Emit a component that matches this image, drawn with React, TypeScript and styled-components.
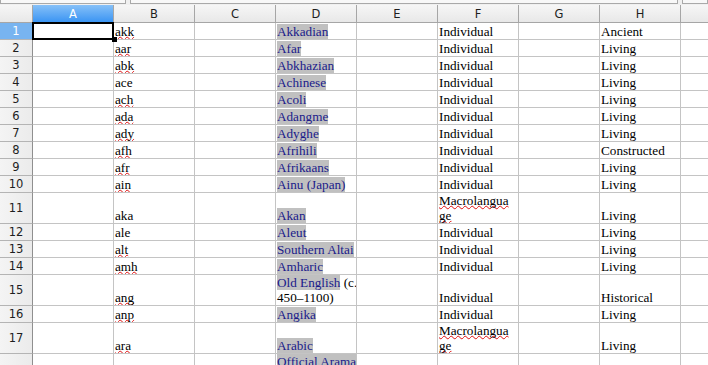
import { FC, ReactNode } from "react";
import styled, { createGlobalStyle } from "styled-components";

interface SheetRow {
  code: string;
  codeOk?: boolean;
  name: string[];
  note?: string[];
  scope: string[];
  type: string;
  lines?: number;
}

const rows: SheetRow[] = [
  { code: "akk", name: ["Akkadian"], scope: ["Individual"], type: "Ancient" },
  { code: "aar", name: ["Afar"], scope: ["Individual"], type: "Living" },
  { code: "abk", name: ["Abkhazian"], scope: ["Individual"], type: "Living" },
  { code: "ace", codeOk: true, name: ["Achinese"], scope: ["Individual"], type: "Living" },
  { code: "ach", name: ["Acoli"], scope: ["Individual"], type: "Living" },
  { code: "ada", name: ["Adangme"], scope: ["Individual"], type: "Living" },
  { code: "ady", name: ["Adyghe"], scope: ["Individual"], type: "Living" },
  { code: "afh", name: ["Afrihili"], scope: ["Individual"], type: "Constructed" },
  { code: "afr", name: ["Afrikaans"], scope: ["Individual"], type: "Living" },
  { code: "ain", name: ["Ainu (Japan)"], scope: ["Individual"], type: "Living" },
  { code: "aka", codeOk: true, name: ["Akan"], scope: ["Macrolangua", "ge"], type: "Living", lines: 2 },
  { code: "ale", codeOk: true, name: ["Aleut"], scope: ["Individual"], type: "Living" },
  { code: "alt", name: ["Southern Altai"], scope: ["Individual"], type: "Living" },
  { code: "amh", name: ["Amharic"], scope: ["Individual"], type: "Living" },
  {
    code: "ang",
    name: ["Old English"],
    note: [" (c.", "450–1100)"],
    scope: ["Individual"],
    type: "Historical",
    lines: 2,
  },
  { code: "anp", name: ["Angika"], scope: ["Individual"], type: "Living" },
  { code: "ara", name: ["Arabic"], scope: ["Macrolangua", "ge"], type: "Living", lines: 2 },
  {
    code: "arc",
    name: ["Official Aramai", "c (700–300", "BCE); Imperial", "Aramaic (700–", "300 BCE)"],
    scope: ["Individual"],
    type: "Ancient",
    lines: 5,
  },
];

const columns = ["A", "B", "C", "D", "E", "F", "G", "H", "I"];

const GlobalStyle = createGlobalStyle`
  html, body {
    margin: 0;
    padding: 0;
    background: #ffffff;
    overflow: hidden;
  }
`;

// Styled Components
const Sheet = styled.div`
  width: 708px;
  height: 365px;
  overflow: hidden;
  display: flex;
  flex-direction: column;
  background: #ffffff;
`;

const TopStrip = styled.div`
  height: 5px;
  flex: none;
  display: flex;
  gap: 4px;
  background: #f0f0f0;
`;

const FieldBox = styled.div<{ $w: number }>`
  width: ${(p) => p.$w}px;
  height: 4px;
  flex: none;
  box-sizing: border-box;
  background: #f8f8f8;
  border: 1px solid #a9a9a9;
  border-top: none;
`;

const HeaderRow = styled.div`
  height: 18px;
  flex: none;
  display: flex;
  box-sizing: border-box;
  border-bottom: 1px solid #a6a6a6;
  background: linear-gradient(#f6f6f6, #e8e8e8);
`;

const Corner = styled.div`
  width: 33px;
  flex: none;
  box-sizing: border-box;
  border-right: 1px solid #a6a6a6;
`;

const ColHeader = styled.div<{ $active?: boolean }>`
  width: 81px;
  flex: none;
  box-sizing: border-box;
  border-right: 1px solid #a6a6a6;
  display: flex;
  align-items: center;
  justify-content: center;
  font-family: "DejaVu Sans", "Liberation Sans", sans-serif;
  font-size: 11.5px;
  color: ${(p) => (p.$active ? "#ffffff" : "#1e1e1e")};
  background: ${(p) => (p.$active ? "linear-gradient(#86c0f8, #3b95f3)" : "transparent")};
`;

const Row = styled.div<{ $h: number }>`
  position: relative;
  height: ${(p) => p.$h}px;
  flex: none;
  display: flex;
`;

const RowHeader = styled.div<{ $active?: boolean }>`
  width: 33px;
  flex: none;
  box-sizing: border-box;
  border-right: 1px solid #8f8f8f;
  border-bottom: 1px solid #b4b4b4;
  display: flex;
  align-items: center;
  justify-content: center;
  font-family: "DejaVu Sans", "Liberation Sans", sans-serif;
  font-size: 11.5px;
  color: ${(p) => (p.$active ? "#ffffff" : "#1e1e1e")};
  background: ${(p) => (p.$active ? "#78b4f0" : "linear-gradient(90deg, #f4f4f4, #ebebeb)")};
`;

const Cell = styled.div`
  width: 81px;
  flex: none;
  box-sizing: border-box;
  border-right: 1px solid #c4c4c4;
  border-bottom: 1px solid #c4c4c4;
  padding: 0 0 0 1px;
  overflow: hidden;
  display: flex;
  flex-direction: column;
  justify-content: flex-end;
  font-family: "Liberation Serif", "Times New Roman", serif;
  font-size: 13.2px;
  line-height: 15px;
  color: #000000;
  white-space: nowrap;
`;

const Line = styled.div`
  height: 15px;
`;

const Spell = styled.span`
  text-decoration: underline wavy #e01010;
  text-decoration-thickness: 1px;
  text-underline-offset: 0px;
  text-decoration-skip-ink: none;
`;

const Field = styled.span`
  background: #c0c0c0;
  color: #1a1a8a;
`;

const Selection = styled.div`
  position: absolute;
  left: 32px;
  top: -1px;
  width: 82px;
  height: 18px;
  box-sizing: border-box;
  border: 2px solid #000000;
  z-index: 2;

  &::after {
    content: "";
    position: absolute;
    right: -5px;
    bottom: -4px;
    width: 5px;
    height: 5px;
    background: #000000;
  }
`;

const Lines: FC<{ items: ReactNode[] }> = ({ items }) => (
  <>
    {items.map((item, i) => (
      <Line key={i}>{item}</Line>
    ))}
  </>
);

// Component
const App: FC = () => {
  return (
    <Sheet>
      <GlobalStyle />
      <TopStrip>
        <FieldBox $w={126} />
        <FieldBox $w={548} />
        <FieldBox $w={26} />
      </TopStrip>

      <HeaderRow>
        <Corner />
        {columns.map((c) => (
          <ColHeader key={c} $active={c === "A"}>
            {c}
          </ColHeader>
        ))}
      </HeaderRow>

      {rows.map((r, index) => {
        const lines = r.lines ?? 1;
        const height = lines === 1 ? 17 : lines * 15 + 1;
        const nameLines: ReactNode[] = r.name.map((n, i) => {
          if (r.note && i === 0) {
            return (
              <>
                <Field>{n}</Field>
                {r.note[0]}
              </>
            );
          }
          return <Field>{n}</Field>;
        });
        if (r.note) nameLines.push(r.note[1]);
        const scopeLines = r.scope.map((s) =>
          s === "Individual" ? s : <Spell>{s}</Spell>
        );

        return (
          <Row key={r.code} $h={height}>
            <RowHeader $active={index === 0}>{index + 1}</RowHeader>
            <Cell />
            <Cell>
              <Line>{r.codeOk ? r.code : <Spell>{r.code}</Spell>}</Line>
            </Cell>
            <Cell />
            <Cell>
              <Lines items={nameLines} />
            </Cell>
            <Cell />
            <Cell>
              <Lines items={scopeLines} />
            </Cell>
            <Cell />
            <Cell>
              <Line>{r.type}</Line>
            </Cell>
            <Cell />
            {index === 0 && <Selection />}
          </Row>
        );
      })}
    </Sheet>
  );
};

export default App;
